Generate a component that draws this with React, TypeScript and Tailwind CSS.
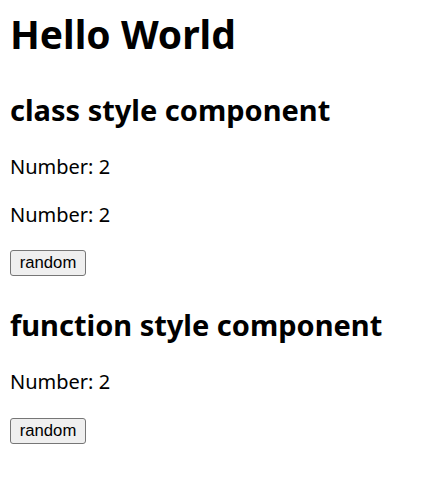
import { useState } from 'react';

// ── Pieces ────────────────────────────────────────────────────────────────────

const HEAD = "font-['Noto_Sans','Open_Sans',sans-serif] font-bold text-black";
const BODY = "font-['Noto_Sans','Open_Sans',sans-serif] text-black";

function NumberLine({ value, className = '' }: { value: number; className?: string }) {
  return <p className={`${BODY} text-[20px] leading-[27px] ${className}`}>Number: {value}</p>;
}

function RandomButton({ onClick, className = '' }: { onClick: () => void; className?: string }) {
  return (
    <div className={`flex ${className}`}>
      <button
        onClick={onClick}
        className="h-[26px] w-[76px] rounded-[3px] border border-[#767676] bg-[#efefef] font-['Liberation_Sans',Arial,sans-serif] text-[16.7px] leading-[20px] text-black hover:bg-[#e5e5e5]"
      >
        random
      </button>
    </div>
  );
}

// ── Root export ───────────────────────────────────────────────────────────────

export default function App() {
  const [classNum, setClassNum] = useState(2);
  const [funcNum, setFuncNum] = useState(2);

  return (
    <div className="flex min-h-[481px] flex-col bg-white px-[10px]">
      <h1 className={`${HEAD} mt-[7px] text-[39px] leading-[53px]`}>Hello World</h1>

      {/* class style */}
      <h2 className={`${HEAD} mt-[30px] text-[29px] leading-[40px]`}>class style component</h2>
      <NumberLine value={classNum} className="mt-[23px]" />
      <NumberLine value={classNum} className="mt-[21px]" />
      <RandomButton onClick={() => setClassNum(Math.floor(Math.random() * 10))} className="mt-[22px]" />

      {/* function style */}
      <h2 className={`${HEAD} mt-[29px] text-[29px] leading-[40px]`}>function style component</h2>
      <NumberLine value={funcNum} className="mt-[23px]" />
      <RandomButton onClick={() => setFuncNum(Math.floor(Math.random() * 10))} className="mt-[23px]" />
    </div>
  );
}
